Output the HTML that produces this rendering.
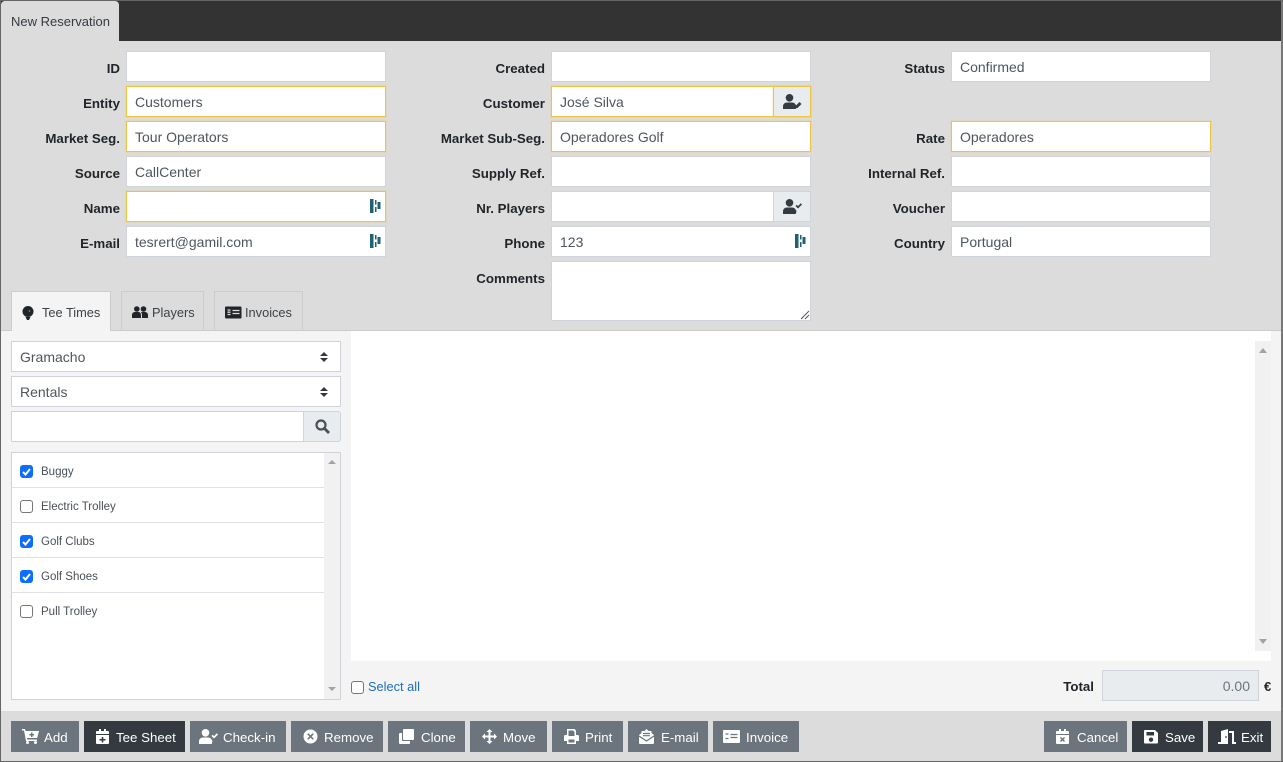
<!DOCTYPE html>
<html><head><meta charset="utf-8"><title>New Reservation</title>
<style>
html,body{margin:0;padding:0}
body{width:1283px;height:762px;overflow:hidden;position:relative;background:#dcdcdc;font-family:"Liberation Sans",sans-serif;color:#212529}
.a{position:absolute;box-sizing:border-box}
.i{position:absolute;box-sizing:border-box;width:260px;height:31px;background:#fff;border:1px solid #ced4da;font-size:14px;line-height:31px;padding-left:8px;color:#4f565c;white-space:nowrap}
.l{position:absolute;width:140px;margin-top:1px;text-align:right;font-weight:bold;font-size:13.3px;line-height:16px;color:#212529;white-space:nowrap}
.ad{position:absolute;box-sizing:border-box;width:38px;height:31px;background:#e9ecef;border:1px solid #ced4da}
.y{border-color:#efc440;box-shadow:0 0 0 1px rgba(240,200,80,.22)}
.tab{position:absolute;box-sizing:border-box;top:291px;height:40px;border:1px solid #ccc;border-bottom:0;font-size:12.8px;line-height:41px;color:#3c4248;white-space:nowrap}
.b{position:absolute;box-sizing:border-box;top:721px;height:31px;background:#6c757d;color:#fff;font-size:13.3px;line-height:33px;white-space:nowrap}
.d{background:#343a40}
.b svg{position:absolute;top:8px;fill:#fff}
.b span{position:absolute;top:0}
.row{position:absolute;left:12px;width:312px;height:1px;background:#dee2e6}
.cb{position:absolute;box-sizing:border-box;left:20px;width:13px;height:13px;border-radius:3px;border:1px solid #767676;background:#fff}
.cb.on{background:#0d6efd;border-color:#0d6efd}
.cb svg{position:absolute;left:0;top:0}
.t{position:absolute;left:41px;margin-top:1px;font-size:11.5px;line-height:14px;color:#495057;white-space:nowrap}
.pw{position:absolute}
</style></head><body>
<svg width="0" height="0" style="position:absolute"><defs>
<g id="pw" fill="#1f6273"><rect x="0" y="0" width="3.500" height="14"/><rect x="5" y="1" width="1.500" height="4.500"/><rect x="5" y="8" width="1.500" height="5"/><rect x="7.500" y="3" width="3" height="7"/></g>
<g id="uc"><circle cx="6.500" cy="3.800" r="3.800"/><path d="M0 15v-2.500C0 10 1.800 8.500 4 8.500h5c1.500 0 2.500.6 3.200 1.500L13.500 12l-.8 3z"/></g>
</defs></svg>

<div class="a" style="left:0;top:0;width:1283px;height:1px;background:#666"></div>
<div class="a" style="left:0;top:1px;width:1283px;height:40px;background:#333"></div>
<div class="a" style="left:1px;top:1px;width:118px;height:40px;background:#dcdcdc;border-radius:4px 4px 0 0;font-size:13px;line-height:41px;padding-left:10px;color:#343a40">New Reservation</div>

<div class="l" style="left:-20px;top:60px">ID</div><div class="i" style="left:126px;top:51px"></div>
<div class="l" style="left:-20px;top:95px">Entity</div><div class="i y" style="left:126px;top:86px">Customers</div>
<div class="l" style="left:-20px;top:130px">Market Seg.</div><div class="i y" style="left:126px;top:121px">Tour Operators</div>
<div class="l" style="left:-20px;top:165px">Source</div><div class="i" style="left:126px;top:156px">CallCenter</div>
<div class="l" style="left:-20px;top:200px">Name</div><div class="i y" style="left:126px;top:191px"></div>
<svg class="pw" style="left:370px;top:199px" width="11" height="14"><use href="#pw"/></svg>
<div class="l" style="left:-20px;top:235px">E-mail</div><div class="i" style="left:126px;top:226px">tesrert@gamil.com</div>
<svg class="pw" style="left:370px;top:234px" width="11" height="14"><use href="#pw"/></svg>

<div class="l" style="left:405px;top:60px">Created</div><div class="i" style="left:551px;top:51px"></div>
<div class="l" style="left:405px;top:95px">Customer</div><div class="i y" style="left:551px;top:86px">José Silva</div>
<div class="ad y" style="left:773px;top:86px"><svg style="position:absolute;left:9px;top:7px" width="19" height="15" viewBox="0 0 19 15" fill="#343a40"><use href="#uc"/><path d="M12 14.500l.5-2.500 4-4 2 2-4 4z"/></svg></div>
<div class="l" style="left:405px;top:130px">Market Sub-Seg.</div><div class="i y" style="left:551px;top:121px">Operadores Golf</div>
<div class="l" style="left:405px;top:165px">Supply Ref.</div><div class="i" style="left:551px;top:156px"></div>
<div class="l" style="left:405px;top:200px">Nr. Players</div><div class="i" style="left:551px;top:191px"></div>
<div class="ad" style="left:773px;top:191px"><svg style="position:absolute;left:9px;top:7px" width="19" height="15" viewBox="0 0 19 15" fill="#343a40"><use href="#uc"/><path d="M12.500 7l1.200-1.200 1.300 1.300 2.800-2.800L19 5.500l-4 4z"/></svg></div>
<div class="l" style="left:405px;top:235px">Phone</div><div class="i" style="left:551px;top:226px">123</div>
<svg class="pw" style="left:795px;top:234px" width="11" height="14"><use href="#pw"/></svg>
<div class="l" style="left:405px;top:270px">Comments</div><div class="i" style="left:551px;top:261px;height:60px"></div>
<svg class="a" style="left:800px;top:310px" width="10" height="10" stroke="#555" stroke-width="1"><path d="M1 9L9 1M5 9L9 5"/></svg>

<div class="l" style="left:805px;top:60px">Status</div><div class="i" style="left:951px;top:51px">Confirmed</div>
<div class="l" style="left:805px;top:130px">Rate</div><div class="i y" style="left:951px;top:121px">Operadores</div>
<div class="l" style="left:805px;top:165px">Internal Ref.</div><div class="i" style="left:951px;top:156px"></div>
<div class="l" style="left:805px;top:200px">Voucher</div><div class="i" style="left:951px;top:191px"></div>
<div class="l" style="left:805px;top:235px">Country</div><div class="i" style="left:951px;top:226px">Portugal</div>

<div class="a" style="left:1px;top:330px;width:1280px;height:1px;background:#ccc"></div>
<div class="a" style="left:1px;top:331px;width:1280px;height:380px;background:#f4f4f4"></div>
<div class="a" style="left:351px;top:331px;width:920px;height:330px;background:#fff"></div>
<div class="a" style="left:1255px;top:341px;width:16px;height:310px;background:#f1f1f1"></div>
<svg class="a" style="left:1255px;top:341px" width="16" height="310" fill="#a3a3a3"><path d="M4 12l4-5 4 5zM4 298l8 0-4 5z"/></svg>

<div class="tab" style="left:11px;width:100px;background:#f4f4f4;height:40px"><svg style="position:absolute;left:10px;top:14px" width="12" height="14" viewBox="0 0 12 14" fill="#212529"><circle cx="6" cy="5.500" r="5.500"/><path d="M3.500 11h5L7 14H5z"/><circle cx="7.500" cy="5" r=".8" fill="#999"/></svg><span style="position:absolute;left:30px">Tee Times</span></div>
<div class="tab" style="left:121px;width:83px"><svg style="position:absolute;left:10px;top:14px" width="16" height="13" viewBox="0 0 16 13" fill="#212529"><circle cx="4.800" cy="3" r="2.800"/><circle cx="11.500" cy="3" r="2.800"/><path d="M0 12V9c0-2 1.500-3 3-3h3.500C8 6 9 7.500 9 9v3zM10 12V9c0-1-.4-2-1-3h4c1.700 0 3 1.300 3 3v3z"/></svg><span style="position:absolute;left:30px">Players</span></div>
<div class="tab" style="left:214px;width:89px"><svg style="position:absolute;left:10px;top:14px" width="17" height="13" viewBox="0 0 17 13"><rect width="16.500" height="12" y=".5" rx="1" fill="#212529"/><path d="M7.500 4.500h7M7.500 7.500h7M2.500 4h3M2.500 8.500h3M2.500 6.200h3" stroke="#ddd" stroke-width="1.300"/></svg><span style="position:absolute;left:30px">Invoices</span></div>

<div class="i" style="left:11px;top:341px;width:330px">Gramacho</div>
<svg class="a" style="left:319px;top:351px" width="10" height="12" fill="#343a40"><path d="M1 5l4-4 4 4zM1 7h8l-4 4z"/></svg>
<div class="i" style="left:11px;top:376px;width:330px">Rentals</div>
<svg class="a" style="left:319px;top:386px" width="10" height="12" fill="#343a40"><path d="M1 5l4-4 4 4zM1 7h8l-4 4z"/></svg>
<div class="i" style="left:11px;top:411px;width:293px"></div>
<div class="ad" style="left:303px;top:411px;border-radius:0 3px 3px 0"><svg style="position:absolute;left:11px;top:7px" width="15" height="15" fill="none" stroke="#495057" stroke-width="2.200"><circle cx="6" cy="6" r="4.500"/><path d="M9.500 9.500L14 14" stroke-width="2.800"/></svg></div>

<div class="a" style="left:11px;top:452px;width:330px;height:248px;background:#fff;border:1px solid #ced4da"></div>
<div class="a" style="left:324px;top:453px;width:16px;height:246px;background:#f1f1f1"></div>
<svg class="a" style="left:324px;top:453px" width="16" height="246" fill="#a3a3a3"><path d="M4 11l4-4 4 4zM4 234h8l-4 4z"/></svg>
<div class="row" style="top:487px"></div><div class="row" style="top:522px"></div><div class="row" style="top:557px"></div><div class="row" style="top:592px"></div>
<div class="cb on" style="top:465px"><svg width="11" height="11" viewBox="0 0 11 11" fill="none" stroke="#fff" stroke-width="2"><path d="M2 6l2.500 2.500L9 3"/></svg></div><div class="t" style="top:464px">Buggy</div>
<div class="cb" style="top:500px"></div><div class="t" style="top:499px">Electric Trolley</div>
<div class="cb on" style="top:535px"><svg width="11" height="11" viewBox="0 0 11 11" fill="none" stroke="#fff" stroke-width="2"><path d="M2 6l2.500 2.500L9 3"/></svg></div><div class="t" style="top:534px">Golf Clubs</div>
<div class="cb on" style="top:570px"><svg width="11" height="11" viewBox="0 0 11 11" fill="none" stroke="#fff" stroke-width="2"><path d="M2 6l2.500 2.500L9 3"/></svg></div><div class="t" style="top:569px">Golf Shoes</div>
<div class="cb" style="top:605px"></div><div class="t" style="top:604px">Pull Trolley</div>

<div class="cb" style="left:351px;top:681px"></div>
<div class="a" style="left:368px;top:679px;font-size:12.800px;line-height:15px;color:#1b6ec2;white-space:nowrap">Select all</div>
<div class="l" style="left:954px;top:678px">Total</div>
<div class="a" style="left:1102px;top:670px;width:157px;height:31px;background:#e9ecef;border:1px solid #ced4da;font-size:14px;line-height:31px;text-align:right;padding-right:8px;color:#6c757d">0.00</div>
<div class="a" style="left:1264px;top:679px;font-size:13px;font-weight:bold;line-height:15px">€</div>

<div class="b" style="left:11px;width:68px"><svg style="left:11px" width="17" height="15" viewBox="0 0 17 15"><path d="M0 0h3l.5 2H17l-1.800 7H5l.3 1.500H15V12H4L2 1.500H0z"/><circle cx="5.500" cy="13.500" r="1.500"/><circle cx="13.500" cy="13.500" r="1.500"/><path d="M9 3.500h1.500v1.500H12v1.500h-1.500V8H9V6.500H7.500V5H9z" fill="#6c757d"/></svg><span style="left:33px">Add</span></div>
<div class="b d" style="left:84px;width:101px"><svg style="left:12px" width="13" height="15" viewBox="0 0 13 15"><path d="M3 0h2v2h3V0h2v2h2a1 1 0 0 1 1 1v2H0V3a1 1 0 0 1 1-1h2zM0 6h13v8a1 1 0 0 1-1 1H1a1 1 0 0 1-1-1z"/><path d="M5.700 8h1.600v2H9.500v1.500H7.300v2H5.700v-2H3.500V10h2.200z" fill="#343a40"/></svg><span style="left:32px">Tee Sheet</span></div>
<div class="b" style="left:190px;width:96px"><svg style="left:9px" width="19" height="15" viewBox="0 0 19 15"><use href="#uc"/><path d="M12.500 7l1.200-1.200 1.300 1.300 2.800-2.800L19 5.500l-4 4z"/></svg><span style="left:33px">Check-in</span></div>
<div class="b" style="left:291px;width:92px"><svg style="left:12px;top:8px" width="15" height="15" viewBox="0 0 15 15"><path fill-rule="evenodd" d="M7.500 .5a7 7 0 1 1 0 14 7 7 0 0 1 0-14zM5.300 4.200L4.200 5.300 6.400 7.500 4.200 9.700l1.100 1.100 2.200-2.200 2.200 2.200 1.100-1.100-2.200-2.200 2.200-2.200-1.100-1.100-2.200 2.200z"/></svg><span style="left:33px">Remove</span></div>
<div class="b" style="left:388px;width:77px"><svg style="left:11px" width="15" height="15" viewBox="0 0 15 15"><rect x="4" y="0" width="11" height="11" rx="1"/><path d="M3 4H1a1 1 0 0 0-1 1v9a1 1 0 0 0 1 1h9a1 1 0 0 0 1-1v-2H4a1 1 0 0 1-1-1z"/></svg><span style="left:33px">Clone</span></div>
<div class="b" style="left:470px;width:77px"><svg style="left:12px" width="15" height="15" viewBox="0 0 15 15"><path d="M7.500 0l3 3H8.500v3.500H12V4.500l3 3-3 3V8.500H8.500V12h2l-3 3-3-3h2V8.500H3v2l-3-3 3-3v2h3.500V3h-2z"/></svg><span style="left:33px">Move</span></div>
<div class="b" style="left:552px;width:71px"><svg style="left:12px" width="15" height="15" viewBox="0 0 15 15"><path fill-rule="evenodd" d="M3 0h7.500L12 1.500V6h1.500A1.500 1.500 0 0 1 15 7.500V12h-3v3H3v-3H0V7.500A1.500 1.500 0 0 1 1.500 6H3zM4.500 1.500V7h6V2.500h-1v-1zM4.500 10.500v3h6v-3z"/></svg><span style="left:33px">Print</span></div>
<div class="b" style="left:628px;width:80px"><svg style="left:11px" width="15" height="15" viewBox="0 0 15 15"><path d="M0 6l2.500-2V2h3L7.500 0l2 2h3v2L15 6v8a1 1 0 0 1-1 1H1a1 1 0 0 1-1-1z"/><path d="M4 4.500h7M4 6.700h7" stroke="#6c757d" stroke-width="1.200"/><path d="M0 7l7.500 5L15 7" fill="none" stroke="#6c757d" stroke-width="1.200"/></svg><span style="left:33px">E-mail</span></div>
<div class="b" style="left:713px;width:86px"><svg style="left:10px;top:9px" width="17" height="13" viewBox="0 0 17 13"><rect width="17" height="13" rx="1"/><path d="M7.500 4.500h7M7.500 7.500h7M2.500 4h3M2.500 8.500h3" stroke="#6c757d" stroke-width="1.300"/></svg><span style="left:33px">Invoice</span></div>

<div class="b" style="left:1044px;width:83px"><svg style="left:12px" width="13" height="15" viewBox="0 0 13 15"><path d="M3 0h2v2h3V0h2v2h2a1 1 0 0 1 1 1v2H0V3a1 1 0 0 1 1-1h2zM0 6h13v8a1 1 0 0 1-1 1H1a1 1 0 0 1-1-1z"/><path d="M4.500 8.500l4 4M8.500 8.500l-4 4" stroke="#6c757d" stroke-width="1.500"/></svg><span style="left:33px">Cancel</span></div>
<div class="b d" style="left:1132px;width:71px"><svg style="left:12px" width="14" height="15" viewBox="0 0 14 15"><path fill-rule="evenodd" d="M1 1h10l3 3v9.500a1 1 0 0 1-1 1H1a1 1 0 0 1-1-1V2a1 1 0 0 1 1-1zM2.500 3v3.500h7.500V3zM7 8.500a2.200 2.200 0 1 0 0 4.400 2.200 2.200 0 0 0 0-4.400z"/></svg><span style="left:33px">Save</span></div>
<div class="b d" style="left:1208px;width:63px"><svg style="left:10px" width="18" height="15" viewBox="0 0 18 15"><path d="M0 13h3V2l7-2v15H0zM11 2h5v11h2v2h-4V4h-3z"/><circle cx="8" cy="8" r=".9" fill="#343a40"/></svg><span style="left:33px">Exit</span></div>

<div class="a" style="left:0;top:1px;width:1px;height:761px;background:#666"></div>
<div class="a" style="left:1281px;top:1px;width:2px;height:761px;background:#777"></div>
<div class="a" style="left:0;top:761px;width:1283px;height:1px;background:#666"></div>
</body></html>
